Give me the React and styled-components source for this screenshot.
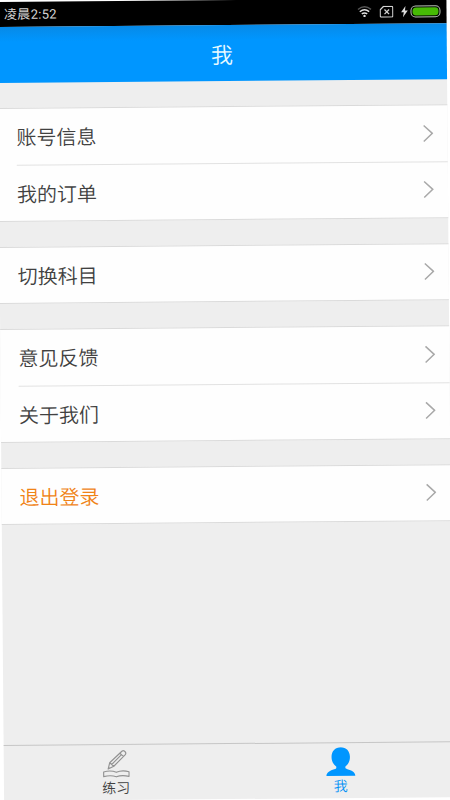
import React from "react";
import styled, { createGlobalStyle } from "styled-components";

const GlobalStyle = createGlobalStyle`
  * { box-sizing: border-box; }
  html, body { margin: 0; background: #fff; }
  body { width: 450px; height: 800px; overflow: hidden; font-family: "Noto Sans CJK SC", sans-serif; font-weight: 350; }
`;

const Screen = styled.main`
  display: flex;
  flex-direction: column;
  width: 449px;
  height: 799px;
  background: #eee;
  color: #414141;
  transform-origin: 0 0;
  transform: translate(-2.6px, 2px) rotate(-0.48deg);
`;

const StatusBar = styled.div`
  display: flex;
  align-items: center;
  justify-content: space-between;
  flex: none;
  height: 25px;
  padding: 0 6.5px 0 6.5px;
  background: #000;
  color: #d5d5d5;
  line-height: 24px;
`;

const Time = styled.span`
  padding-top: 1px;
  font-family: Roboto, "Noto Sans CJK SC", sans-serif;
  font-size: 13px;
  font-weight: 400;
  letter-spacing: 0.3px;
`;

const StatusIcons = styled.div`
  display: flex;
  align-items: center;
  gap: 7px;
`;

const Power = styled.div`
  display: flex;
  align-items: center;
  gap: 2px;
`;

const Battery = styled.div`
  width: 30px;
  height: 12px;
  padding: 1px;
  border: 1px solid #b9c4b5;
  border-radius: 5px;
  background: #000;
`;

const Charge = styled.div`
  height: 100%;
  border-radius: 3.5px;
  background: #46ba05;
`;

const Header = styled.header`
  display: flex;
  align-items: center;
  justify-content: center;
  flex: none;
  height: 56px;
  padding: 0 1px 1px 0;
  background: linear-gradient(#078ae7, #0096ff 15px);
  color: #e9faff;
  font-size: 22px;
  line-height: 32px;
`;

const Content = styled.div`
  display: flex;
  flex-direction: column;
  flex: 1;
  gap: 25.2px;
  padding-top: 25px;
`;

const Group = styled.section`
  background: #fefefe;
  border-top: 1px solid #dadada;
  border-bottom: 1px solid #dadada;
`;

const Row = styled.div`
  display: flex;
  align-items: center;
  justify-content: space-between;
  height: ${(p) => (p.$single ? 54.9 : 55.9)}px;
  margin-left: 18px;
  padding: 1px 14px 0 0;
  color: ${(p) => (p.$accent ? "#f08316" : "#414141")};
  font-size: 20px;
  line-height: 30px;

  & + & { border-top: 1px solid #e2e2e2; }
`;

const Arrow = styled.svg`
  width: 11px;
  height: 18px;
  margin-top: -1px;
  fill: none;
  stroke: #a9a9a9;
  stroke-width: 1.5;
`;

const TabBar = styled.nav`
  display: flex;
  flex: none;
  height: 56.5px;
  border-top: 1.5px solid #c6c6c6;
`;

const Tab = styled.div`
  display: flex;
  flex: 1;
  flex-direction: column;
  align-items: center;
  padding-top: ${(p) => (p.$active ? 4 : 5)}px;
  color: ${(p) => (p.$active ? "#0091f5" : "#414141")};
  font-size: 14px;
  line-height: 19px;
`;

const WifiIcon = () => (
  <svg width="16" height="13" viewBox="0 0 16 13" fill="none">
    <path d="M1.5 4.5Q8-.7 14.5 4.5" stroke="#555" strokeWidth="1.4" />
    <path d="M3.3 6.8Q8 3 12.7 6.8M5.3 9Q8 7 10.7 9" stroke="#e2e2e2" strokeWidth="1.5" />
    <circle cx="8" cy="11" r="1.2" fill="#e2e2e2" />
  </svg>
);

const SimIcon = () => (
  <svg width="14" height="12" viewBox="0 0 14 12" fill="none" stroke="#d2d2d2">
    <path d="M4 .7H12.3Q13.3.7 13.3 1.7V10.3Q13.3 11.3 12.3 11.3H1.7Q.7 11.3.7 10.3V4Z" strokeWidth="1.2" />
    <path d="m5 3.8 4.6 4.6m0-4.6L5 8.4" strokeWidth="1.3" />
  </svg>
);

const BoltIcon = () => (
  <svg width="8" height="12" viewBox="0 0 8 12" fill="#ddd">
    <path d="M5 .4.6 6.6h2.7L2.4 11.7 7.3 5H4.5Z" />
  </svg>
);

const PracticeIcon = () => (
  <svg width="27" height="28" viewBox="0 0 27 28" fill="none" stroke="#929292" strokeWidth="1.15" strokeLinejoin="round">
    <path d="m5.3 19 1.6-6.3L19.2 1.3q1.4-1.2 3 .2t.4 3.1L11 16.2ZM6.9 12.7l4.1 3.5M17.2 3.3l3.6 3.3M8.9 14.4 18.3 5.2M5.8 17.3l1.3 1" />
    <path d="M13.5 22.3Q8 19.8 .8 21.8V26.5Q8 24.6 13.5 26.8 19 24.6 26.2 26.5V21.8Q19 19.8 13.5 22.3Z" />
  </svg>
);

const PersonIcon = () => (
  <svg width="30" height="29" viewBox="0 0 30 29" fill="#0096ff">
    <path d="M15 0c5.4 0 9.2 3.8 9.2 9.8 0 4.1-1.7 7.4-4.6 9.6-.4 1.6.3 2.1 2 2.7 4.2 1.4 7.5 2.6 7.9 6.7H.5c.4-4.1 3.7-5.3 7.9-6.7 1.7-.6 2.4-1.1 2-2.7-2.9-2.2-4.6-5.5-4.6-9.6C5.8 3.8 9.6 0 15 0Z" />
  </svg>
);

const groups = [
  [{ label: "账号信息" }, { label: "我的订单" }],
  [{ label: "切换科目" }],
  [{ label: "意见反馈" }, { label: "关于我们" }],
  [{ label: "退出登录", accent: true }],
];

export default function App() {
  return (
    <>
      <GlobalStyle />
      <Screen>
        <StatusBar>
          <Time>凌晨2:52</Time>
          <StatusIcons>
            <WifiIcon />
            <SimIcon />
            <Power>
              <BoltIcon />
              <Battery><Charge /></Battery>
            </Power>
          </StatusIcons>
        </StatusBar>
        <Header>我</Header>
        <Content>
          {groups.map((rows) => (
            <Group key={rows[0].label}>
              {rows.map(({ label, accent }) => (
                <Row key={label} $accent={accent} $single={rows.length === 1}>
                  {label}
                  <Arrow viewBox="0 0 11 18"><path d="m1.2 1 8.6 8-8.6 8" /></Arrow>
                </Row>
              ))}
            </Group>
          ))}
        </Content>
        <TabBar>
          <Tab><PracticeIcon />练习</Tab>
          <Tab $active><PersonIcon />我</Tab>
        </TabBar>
      </Screen>
    </>
  );
}
